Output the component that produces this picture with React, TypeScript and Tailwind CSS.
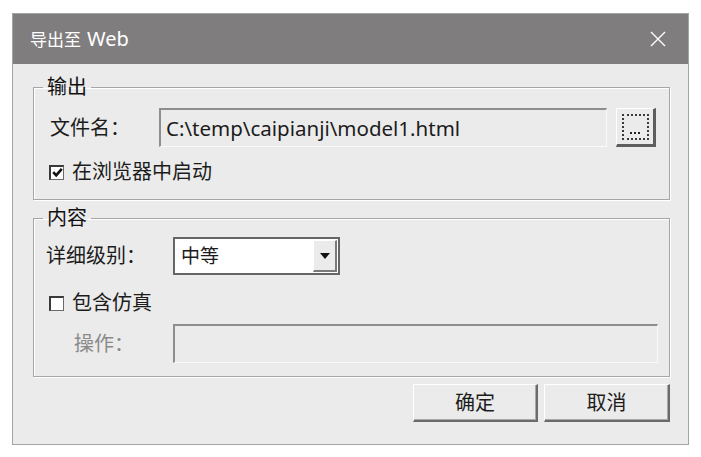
import React from 'react';

const font = '"Noto Sans", "Noto Sans CJK SC", sans-serif';

function CheckBox({ checked, label }: { checked: boolean; label: string }) {
  return (
    <div className="flex h-[24px] items-center gap-[8px]">
      <span className="flex h-[15px] w-[15px] items-center justify-center border-l-2 border-t-2 border-b border-r border-l-[#3a3a3a] border-t-[#3a3a3a] border-b-[#6a6a6a] border-r-[#6a6a6a] bg-white">
        {checked && (
          <svg width="11" height="11" viewBox="0 0 11 11">
            <path d="M1.2 5.2 L4.2 8.4 L9.8 1.8" fill="none" stroke="#111" strokeWidth="2.6" />
          </svg>
        )}
      </span>
      <span className="text-[20px] leading-[24px] text-[#1c1c1c]">{label}</span>
    </div>
  );
}

function DialogButton({ children, width }: { children: React.ReactNode; width: string }) {
  return (
    <button
      type="button"
      className={`flex h-[38px] ${width} items-center justify-center border-t border-l border-t-white border-l-white border-b-2 border-r-2 border-b-[#6b6b6b] border-r-[#6b6b6b] bg-[#ebebeb] text-[20px] text-[#1c1c1c] shadow-[inset_-1px_-1px_0_#a8a8a8]`}
    >
      {children}
    </button>
  );
}

export default function App() {
  return (
    <div className="min-h-screen bg-white pl-[12px] pt-[13px]" style={{ fontFamily: font }}>
      <div className="flex h-[432px] w-[677px] flex-col border border-[#a4a4a4] bg-[#ebebeb]">
        {/* barre de titre */}
        <div className="flex h-[50px] items-center justify-between bg-[#7f7d7e] pl-[17px] pr-[22px] text-white">
          <span className="text-[17px]">
            导出至<span className="ml-[6px] text-[20px]">Web</span>
          </span>
          <svg width="16" height="16" viewBox="0 0 16 16">
            <path d="M1 1 L15 15 M15 1 L1 15" stroke="#fff" strokeWidth="1.4" />
          </svg>
        </div>

        <div className="flex flex-1 flex-col pl-[20px] pr-[18px]">
          {/* 输出 */}
          <fieldset className="mt-[12px] border border-[#a6a6a6] shadow-[inset_1px_1px_0_#fff,1px_1px_0_#fff]">
            <legend className="ml-[9px] px-[4px] text-[20px] leading-[22px] text-[#111]">输出</legend>
            <div className="pb-[15px] pl-[16px] pr-[13px] pt-[10px]">
              <div className="flex items-center">
                <span className="w-[109px] text-[20px] text-[#1c1c1c]">文件名：</span>
                <div className="flex h-[39px] w-[448px] items-center border-l-2 border-t-2 border-l-[#8e8e8e] border-t-[#8e8e8e] border-b border-r border-b-[#fafafa] border-r-[#fafafa] bg-[#ebebeb] pl-[5px] text-[20.5px] text-[#1c1c1c]">
                  C:\temp\caipianji\model1.html
                </div>
                <button
                  type="button"
                  className="ml-[9px] flex h-[39px] w-[40px] items-center justify-center border-l border-t border-l-white border-t-white border-b-[3px] border-r-[3px] border-b-[#5e5e5e] border-r-[#5e5e5e] bg-[#ebebeb]"
                >
                  <span className="flex h-[26px] w-[27px] items-end justify-center gap-[2px] border-2 border-dotted border-[#3a3a3a] pb-[4px]">
                    <span className="h-[2px] w-[2px] bg-[#222]" />
                    <span className="h-[2px] w-[2px] bg-[#222]" />
                    <span className="h-[2px] w-[2px] bg-[#222]" />
                  </span>
                </button>
              </div>
              <div className="mt-[13px] -ml-px">
                <CheckBox checked label="在浏览器中启动" />
              </div>
            </div>
          </fieldset>

          {/* 内容 */}
          <fieldset className="mt-[7px] border border-[#a6a6a6] shadow-[inset_1px_1px_0_#fff,1px_1px_0_#fff]">
            <legend className="ml-[9px] px-[4px] text-[20px] leading-[22px] text-[#111]">内容</legend>
            <div className="pb-[13px] pl-[12px] pr-[11px] pt-[8px]">
              <div className="flex items-center">
                <span className="w-[127px] text-[20px] text-[#1c1c1c]">详细级别：</span>
                <div className="flex h-[38px] w-[167px] items-stretch border-2 border-[#666666] bg-white">
                  <span className="flex flex-1 items-center pl-[6px] text-[19px] text-[#1c1c1c]">中等</span>
                  <span className="my-[1px] mr-[1px] flex w-[24px] items-center justify-center border-l border-t border-l-white border-t-white border-b-2 border-r-2 border-b-[#7a7a7a] border-r-[#7a7a7a] bg-[#ebebeb]">
                    <svg width="10" height="6" viewBox="0 0 10 6">
                      <path d="M0 0 H10 L5 6 Z" fill="#111" />
                    </svg>
                  </span>
                </div>
              </div>
              <div className="mt-[16px] ml-[3px]">
                <CheckBox checked={false} label="包含仿真" />
              </div>
              <div className="mt-[9px] flex items-center">
                <span className="w-[127px] pl-[28px] text-[20px] text-[#8a8a8a]">操作：</span>
                <div className="h-[39px] flex-1 border-l-2 border-t-2 border-l-[#8e8e8e] border-t-[#8e8e8e] border-b border-r border-b-[#fafafa] border-r-[#fafafa] bg-[#ebebeb]" />
              </div>
            </div>
          </fieldset>

          <div className="mt-[7px] flex justify-end gap-[6px]">
            <DialogButton width="w-[125px]">确定</DialogButton>
            <DialogButton width="w-[126px]">取消</DialogButton>
          </div>
        </div>
      </div>
    </div>
  );
}
